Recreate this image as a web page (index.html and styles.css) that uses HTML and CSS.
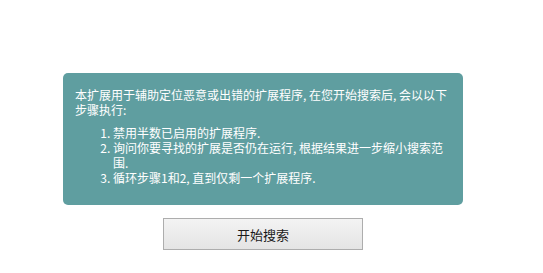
FILE: index.html
```html
<!DOCTYPE html>
<html lang="zh-CN">
<head>
<meta charset="utf-8">
<title>扩展程序搜索</title>
<link rel="stylesheet" href="styles.css">
</head>
<body>
<div class="page">
  <div class="info">
    <p class="intro">本扩展用于辅助定位恶意或出错的扩展程序, 在您开始搜索后, 会以以下步骤执行:</p>
    <ol class="steps">
      <li>禁用半数已启用的扩展程序.</li>
      <li>询问你要寻找的扩展是否仍在运行, 根据结果进一步缩小搜索范围.</li>
      <li>循环步骤1和2, 直到仅剩一个扩展程序.</li>
    </ol>
  </div>
  <button class="start">开始搜索</button>
</div>
</body>
</html>
```

FILE: styles.css
```css
html, body {
  margin: 0;
  padding: 0;
  background: #ffffff;
}

.page {
  width: 400px;
  padding: 73px 0 0 63px;
  display: flex;
  flex-direction: column;
  font-family: "Noto Sans CJK SC", "Noto Sans", sans-serif;
}

.info {
  background: #5f9ea0;
  color: #ffffff;
  border-radius: 5px;
  padding: 14px 12px 12px;
  font-size: 12px;
  line-height: 15px;
  height: 132px;
  box-sizing: border-box;
}

.intro {
  margin: 0 0 8px;
}

.steps {
  margin: 0;
  padding-left: 38px;
}

.start {
  align-self: center;
  margin-top: 13px;
  width: 200px;
  height: 32px;
  box-sizing: border-box;
  border: 1px solid #adadad;
  border-radius: 0;
  background: linear-gradient(#f3f3f3, #e4e4e4);
  color: #1a1a1a;
  font-family: "Noto Sans CJK SC", "Noto Sans", sans-serif;
  font-size: 13px;
  padding: 0;
}
```
